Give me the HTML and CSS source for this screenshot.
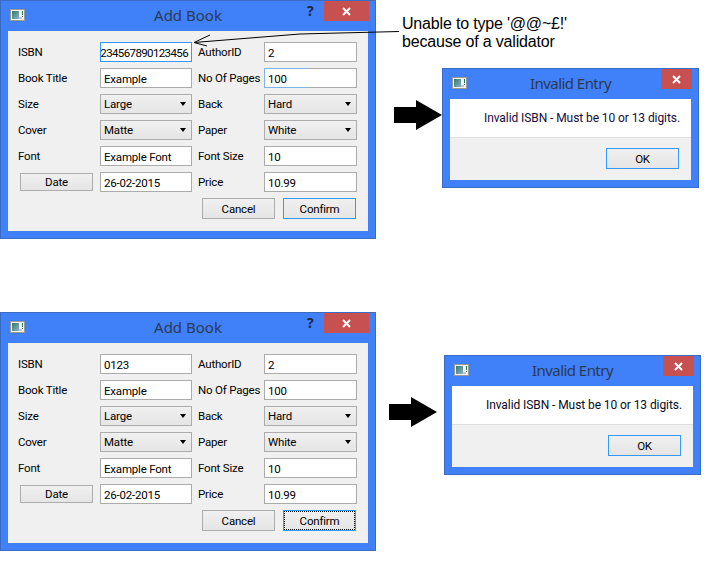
FILE: index.html
```html
<!DOCTYPE html>
<html lang="en">
<head>
<meta charset="utf-8">
<title>Add Book validation</title>
<link rel="stylesheet" href="styles.css">
</head>
<body>
<svg class="defs" width="0" height="0" aria-hidden="true">
  <defs>
    <linearGradient id="tile" x1="0" y1="0" x2="1" y2="1"><stop offset="0" stop-color="#2f7d6a"/><stop offset="1" stop-color="#8fb0c8"/></linearGradient>
    <symbol id="appicon" viewBox="0 0 15 12">
      <rect x="0.5" y="0.5" width="14" height="11" fill="#f4f4f4" stroke="#9a9a9a"/>
      <rect x="2" y="2" width="7" height="8" fill="url(#tile)"/>
      <rect x="9" y="8" width="3" height="2" fill="#c8c8c8"/>
      <rect x="12" y="2" width="1" height="4" fill="#2a7a60"/>
      <rect x="12" y="7" width="1" height="1" fill="#2a7a60"/>
    </symbol>
    <symbol id="closeicon" viewBox="0 0 9 9">
      <path d="M1 1L8 8M8 1L1 8" stroke="#fff" stroke-width="2" fill="none"/>
    </symbol>
    <symbol id="bigarrow" viewBox="0 0 48 30">
      <path d="M0 7H22V0L48 15L22 30V23H0Z" fill="#000"/>
    </symbol>
  </defs>
</svg>

<section class="window book-one">
  <header class="titlebar">
    <svg class="appicon"><use href="#appicon"/></svg>
    <h1 class="title">Add Book</h1>
    <span class="help">?</span>
    <span class="close"><svg class="closeglyph"><use href="#closeicon"/></svg></span>
  </header>
  <div class="client">
    <div class="form">
      <span class="label">ISBN</span><div class="field focus isbn-long"><span>1234567890123456</span></div>
      <span class="label side">AuthorID</span><div class="field">2</div>
      <span class="label">Book Title</span><div class="field">Example</div>
      <span class="label side">No Of Pages</span><div class="field fading">100</div>
      <span class="label">Size</span><div class="combo">Large</div>
      <span class="label side">Back</span><div class="combo">Hard</div>
      <span class="label">Cover</span><div class="combo">Matte</div>
      <span class="label side">Paper</span><div class="combo">White</div>
      <span class="label">Font</span><div class="field">Example Font</div>
      <span class="label side">Font Size</span><div class="field">10</div>
      <div class="date-cell"><button class="btn date">Date</button></div><div class="field">26-02-2015</div>
      <span class="label side">Price</span><div class="field">10.99</div>
    </div>
    <div class="actions">
      <button class="btn">Cancel</button>
      <button class="btn default">Confirm</button>
    </div>
  </div>
</section>

<section class="window book-two">
  <header class="titlebar">
    <svg class="appicon"><use href="#appicon"/></svg>
    <h1 class="title">Add Book</h1>
    <span class="help">?</span>
    <span class="close"><svg class="closeglyph"><use href="#closeicon"/></svg></span>
  </header>
  <div class="client">
    <div class="form">
      <span class="label">ISBN</span><div class="field">0123</div>
      <span class="label side">AuthorID</span><div class="field">2</div>
      <span class="label">Book Title</span><div class="field">Example</div>
      <span class="label side">No Of Pages</span><div class="field">100</div>
      <span class="label">Size</span><div class="combo">Large</div>
      <span class="label side">Back</span><div class="combo">Hard</div>
      <span class="label">Cover</span><div class="combo">Matte</div>
      <span class="label side">Paper</span><div class="combo">White</div>
      <span class="label">Font</span><div class="field">Example Font</div>
      <span class="label side">Font Size</span><div class="field">10</div>
      <div class="date-cell"><button class="btn date">Date</button></div><div class="field">26-02-2015</div>
      <span class="label side">Price</span><div class="field">10.99</div>
    </div>
    <div class="actions">
      <button class="btn">Cancel</button>
      <button class="btn default dotted">Confirm</button>
    </div>
  </div>
</section>

<section class="window dialog dialog-one">
  <header class="titlebar">
    <svg class="appicon"><use href="#appicon"/></svg>
    <h1 class="title">Invalid Entry</h1>
    <span class="close"><svg class="closeglyph"><use href="#closeicon"/></svg></span>
  </header>
  <div class="client">
    <p class="message">Invalid ISBN - Must be 10 or 13 digits.</p>
    <div class="dialog-actions"><button class="btn default">OK</button></div>
  </div>
</section>

<section class="window dialog dialog-two">
  <header class="titlebar">
    <svg class="appicon"><use href="#appicon"/></svg>
    <h1 class="title">Invalid Entry</h1>
    <span class="close"><svg class="closeglyph"><use href="#closeicon"/></svg></span>
  </header>
  <div class="client">
    <p class="message">Invalid ISBN - Must be 10 or 13 digits.</p>
    <div class="dialog-actions"><button class="btn default">OK</button></div>
  </div>
</section>

<p class="note">Unable to type '@@~£!'<br>because of a validator</p>
<svg class="pointer" width="714" height="60" viewBox="0 0 714 60" aria-hidden="true">
  <path d="M399 31.5L300 34L194 42.5M194 42.5L210 35M194 42.5L207 46" stroke="#000" fill="none"/>
</svg>
<svg class="bigarrow arrow-one"><use href="#bigarrow"/></svg>
<svg class="bigarrow arrow-two"><use href="#bigarrow"/></svg>
</body>
</html>
```
FILE: styles.css
```css
* { box-sizing: border-box; }
html, body { margin: 0; padding: 0; }
body {
  position: relative;
  width: 714px;
  height: 574px;
  overflow: hidden;
  background: #fff;
  font-family: Roboto, "Noto Sans", sans-serif;
  font-size: 11.5px;
  letter-spacing: -0.2px;
  color: #000;
}
.defs { position: absolute; }

.window {
  position: absolute;
  display: flex;
  flex-direction: column;
  background: #4080f8;
  border: 1px solid #3a6cc4;
  padding: 0 7px 7px;
}
.book-one { left: 0; top: 0; width: 376px; height: 239px; }
.book-two { left: 0; top: 312px; width: 376px; height: 239px; }
.dialog { width: 257px; height: 120px; }
.dialog-one { left: 442px; top: 68px; }
.dialog-two { left: 444px; top: 355px; }

.titlebar {
  position: relative;
  height: 30px;
  flex: none;
  display: flex;
  align-items: flex-start;
  justify-content: center;
}
.title {
  margin: 0;
  font-family: "Noto Sans", sans-serif;
  font-size: 15px;
  font-weight: 400;
  letter-spacing: 0;
  line-height: 28px;
  color: #2b3a55;
}
.dialog .title { letter-spacing: -0.55px; }
.appicon {
  position: absolute;
  left: 2px;
  top: 8px;
  width: 15px;
  height: 12px;
}
.help {
  position: absolute;
  left: 299px;
  top: 1px;
  font-family: "Noto Sans", sans-serif;
  font-size: 14px;
  line-height: 18px;
  font-weight: 700;
  color: #1f2a3c;
}
.close {
  position: absolute;
  right: -1px;
  top: 0;
  width: 45px;
  height: 20px;
  background: #c75050;
  display: flex;
  align-items: center;
  justify-content: center;
}
.dialog .close { width: 31px; right: -1px; }
.closeglyph { width: 9px; height: 9px; display: block; }

.client {
  flex: 1;
  display: flex;
  flex-direction: column;
  background: #f0f0f0;
  padding: 11px 0 0 10px;
}
.form {
  display: grid;
  grid-template-columns: 82px 92px 72px 93px;
  grid-auto-rows: 20px;
  row-gap: 6px;
}
.label { line-height: 20px; white-space: nowrap; }
.label.side { padding-left: 6px; }

.field {
  display: flex;
  align-items: center;
  height: 20px;
  padding: 1px 3px 0;
  background: #fff;
  border: 1px solid #ababab;
  overflow: hidden;
  white-space: nowrap;
}
.field.focus { border-color: #3399ff; }
.isbn-long { justify-content: flex-end; padding: 1px 3px 0 0; }
.isbn-long span { flex: none; letter-spacing: -0.62px; }
.field.fading {
  border-image: linear-gradient(90deg, #7eb4ea 0%, #7eb4ea 45%, #ababab 50%, #ababab 100%) 1;
}

.combo {
  position: relative;
  height: 20px;
  line-height: 18px;
  padding: 0 3px;
  border: 1px solid #acacac;
  background: linear-gradient(#f0f0f0, #e5e5e5);
}
.combo::after {
  content: "";
  position: absolute;
  right: 5px;
  top: 7px;
  border-left: 3.5px solid transparent;
  border-right: 3.5px solid transparent;
  border-top: 4px solid #000;
}

.btn {
  display: block;
  width: 73px;
  height: 21px;
  padding: 0;
  font: inherit;
  letter-spacing: inherit;
  color: #000;
  background: linear-gradient(#f0f0f0, #e5e5e5);
  border: 1px solid #acacac;
}
.btn.default { border-color: #3399ff; }
.btn.dotted { outline: 1px dotted #000; outline-offset: -2px; }
.date-cell { display: flex; align-items: center; padding-left: 2px; }
.btn.date { height: 18px; }

.actions {
  display: flex;
  justify-content: flex-end;
  gap: 8px;
  margin-top: 6px;
  padding-right: 12px;
}

.dialog .client { padding: 0; }
.message {
  margin: 0;
  height: 39px;
  flex: none;
  background: #fff;
  border-bottom: 1px solid #dfdfdf;
  padding-right: 11px;
  text-align: right;
  font-size: 12px;
  letter-spacing: -0.08px;
  line-height: 38px;
  color: #1a0a3a;
}
.dialog-two .message { color: #0a0a20; }
.dialog-actions {
  flex: 1;
  display: flex;
  justify-content: flex-end;
  padding: 10px 12px 0 0;
}

.note {
  position: absolute;
  left: 402px;
  top: 15px;
  margin: 0;
  font-family: "Liberation Sans", Arial, sans-serif;
  font-size: 16px;
  letter-spacing: -0.18px;
  line-height: 18px;
  color: #000;
}
.pointer { position: absolute; left: 0; top: 0; }
.bigarrow { position: absolute; width: 48px; height: 30px; }
.arrow-one { left: 394px; top: 100px; }
.arrow-two { left: 389px; top: 397px; }
```
